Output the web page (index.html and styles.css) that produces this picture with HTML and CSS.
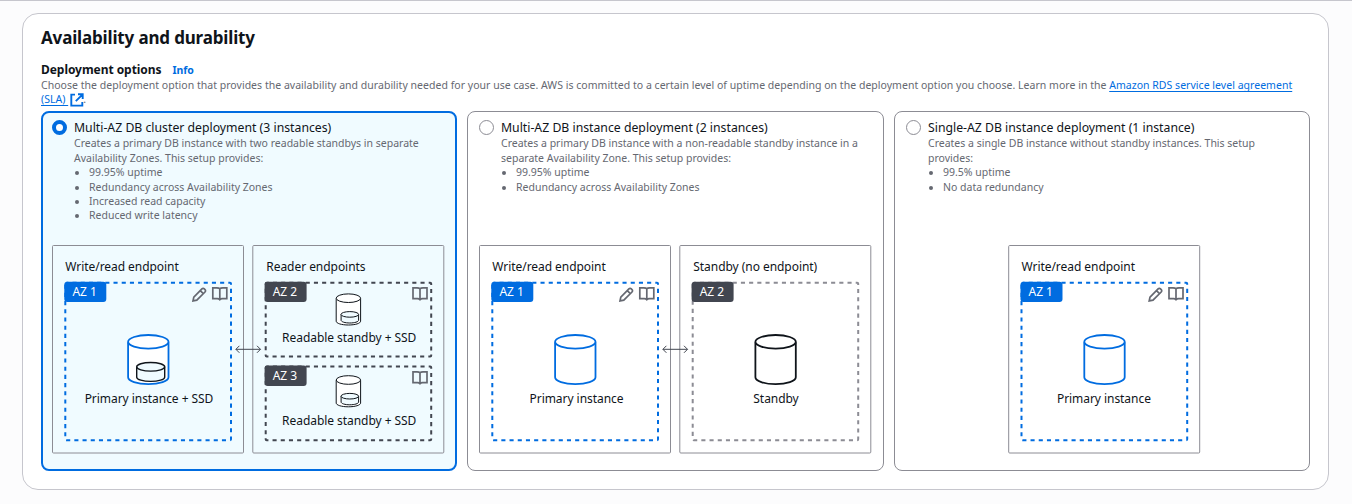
FILE: index.html
```
<!DOCTYPE html>
<html lang="en">
<head>
<meta charset="utf-8">
<title>Availability and durability</title>
<link rel="stylesheet" href="styles.css">
</head>
<body>
<svg class="defs" width="0" height="0" aria-hidden="true">
  <defs>
    <symbol id="cylinder" viewBox="0 0 44 52" overflow="visible">
      <path d="M1.8 8.7V43.7C1.8 47.5 10.8 50.6 22 50.6S42.2 47.5 42.2 43.7V8.7"/>
      <ellipse cx="22" cy="8.2" rx="20.2" ry="6.8"/>
    </symbol>
    <symbol id="disk" viewBox="0 0 30 21" overflow="visible">
      <path d="M1 5.3V15.7C1 18 7.3 19.9 15 19.9S29 18 29 15.7V5.3"/>
      <ellipse cx="15" cy="5.3" rx="14" ry="4.3"/>
    </symbol>
    <symbol id="reader" viewBox="0 0 26 33" overflow="visible">
      <path class="white" d="M.8 5.2V28C.8 30.2 6.2 31.8 13 31.8S25.2 30.2 25.2 28V5.2"/>
      <ellipse class="white" cx="13" cy="5" rx="12.2" ry="4.3"/>
      <path class="tint" d="M5.7 21.2V27C5.7 28.6 9.6 29.8 14.4 29.8S23.2 28.6 23.2 27V21.2"/>
      <ellipse class="tint" cx="14.4" cy="21.2" rx="8.8" ry="2.8"/>
    </symbol>
    <symbol id="book" viewBox="0 0 16 16" overflow="visible">
      <path d="M8 2.4C7.5 1.8 6.5 1.5 5 1.5H1V12.4H5.5C6.8 12.4 7.4 12.6 8 13.3C8.6 12.6 9.2 12.4 10.5 12.4H15V1.5H11C9.5 1.5 8.5 1.8 8 2.4ZM8 2.4V13.8"/>
    </symbol>
    <symbol id="pencil" viewBox="0 0 16 16" overflow="visible">
      <path d="M1.4 14.2L2.2 10.4L10.3 2.2C11 1.5 12 1.5 12.7 2.2L13.4 2.9C14.1 3.6 14.1 4.6 13.4 5.3L5.2 13.4ZM8.7 3.9L11.7 6.9"/>
    </symbol>
    <symbol id="arrows" viewBox="0 0 26 8" overflow="visible">
      <path d="M.7 4H25.3M4.2 .5L.7 4L4.2 7.5M21.8 .5L25.3 4L21.8 7.5"/>
    </symbol>
  </defs>
</svg>
<main class="container">
  <h1 class="heading">Availability and durability</h1>
  <div class="field-label"><span class="label">Deployment options</span><a class="info">Info</a></div>
  <p class="description">Choose the deployment option that provides the availability and durability needed for your use case. AWS is committed to a certain level of uptime depending on the deployment option you choose. Learn more in the <a class="link">Amazon RDS service level agreement<br>(SLA) </a><svg class="external" viewBox="0 0 14 14"><path d="M5 1.6H1.3V12.6H12.3V9M8 1.3H12.7V6M12.4 1.6L5.8 8.2"/></svg>.</p>
  <div class="tiles">
    <section class="tile selected">
      <div class="option">
        <span class="radio"></span>
        <div class="option-body">
          <h2 class="option-title">Multi-AZ DB cluster deployment (3 instances)</h2>
          <p class="option-text">Creates a primary DB instance with two readable standbys in separate<br>Availability Zones. This setup provides:</p>
          <ul class="benefits"><li>99.95% uptime</li><li>Redundancy across Availability Zones</li><li>Increased read capacity</li><li>Reduced write latency</li></ul>
        </div>
      </div>
      <svg class="diagram" width="393" height="209" viewBox="0 0 393 209">
        <rect class="frame" x=".5" y=".5" width="191" height="207.5" rx="1"/>
        <rect class="frame" x="200.8" y=".5" width="191" height="207.5" rx="1"/>
        <text class="text" x="13.3" y="26">Write/read endpoint</text>
        <text class="text" x="214.3" y="26">Reader endpoints</text>
        <rect class="zone blue" x="13.3" y="37.7" width="165.7" height="157.5" rx="1"/>
        <rect class="badge blue-fill" x="12.3" y="36.7" width="42" height="20.3" rx="3"/>
        <text class="text badge-text" x="20.4" y="51">AZ 1</text>
        <use class="icon" href="#pencil" x="139.6" y="41.7" width="16" height="16"/>
        <use class="icon" href="#book" x="159.8" y="41.3" width="16" height="16"/>
        <use class="db blue" href="#cylinder" x="74.3" y="88.6" width="44" height="52"/>
        <use class="disk" href="#disk" x="83.7" y="116.5" width="30" height="21"/>
        <text class="text mid" x="97" y="158">Primary instance + SSD</text>
        <rect class="zone dark" x="213.7" y="37.7" width="165.5" height="73.7" rx="1"/>
        <rect class="badge dark-fill" x="212.6" y="36.7" width="42" height="20.3" rx="3"/>
        <text class="text badge-text" x="220.7" y="51">AZ 2</text>
        <use class="icon" href="#book" x="360" y="41.3" width="16" height="16"/>
        <use class="mini" href="#reader" x="283.4" y="48.2" width="26" height="33"/>
        <text class="text mid" x="297.2" y="97">Readable standby + SSD</text>
        <rect class="zone dark" x="213.7" y="121.6" width="165.5" height="73.7" rx="1"/>
        <rect class="badge dark-fill" x="212.6" y="120.6" width="42" height="20.3" rx="3"/>
        <text class="text badge-text" x="220.7" y="135">AZ 3</text>
        <use class="icon" href="#book" x="360" y="125.3" width="16" height="16"/>
        <use class="mini" href="#reader" x="283.4" y="130" width="26" height="33"/>
        <text class="text mid" x="297.2" y="180">Readable standby + SSD</text>
        <use class="arrows" href="#arrows" x="183.2" y="100.3" width="26" height="8"/>
      </svg>
    </section>
    <section class="tile">
      <div class="option">
        <span class="radio"></span>
        <div class="option-body">
          <h2 class="option-title">Multi-AZ DB instance deployment (2 instances)</h2>
          <p class="option-text">Creates a primary DB instance with a non-readable standby instance in a<br>separate Availability Zone. This setup provides:</p>
          <ul class="benefits"><li>99.95% uptime</li><li>Redundancy across Availability Zones</li></ul>
        </div>
      </div>
      <svg class="diagram" width="393" height="209" viewBox="0 0 393 209">
        <rect class="frame" x=".5" y=".5" width="191" height="207.5" rx="1"/>
        <rect class="frame" x="200.8" y=".5" width="191" height="207.5" rx="1"/>
        <text class="text" x="13.3" y="26">Write/read endpoint</text>
        <text class="text" x="214.3" y="26">Standby (no endpoint)</text>
        <rect class="zone blue" x="13.3" y="37.7" width="165.7" height="157.5" rx="1"/>
        <rect class="badge blue-fill" x="12.3" y="36.7" width="42" height="20.3" rx="3"/>
        <text class="text badge-text" x="20.4" y="51">AZ 1</text>
        <use class="icon" href="#pencil" x="139.6" y="41.7" width="16" height="16"/>
        <use class="icon" href="#book" x="159.8" y="41.3" width="16" height="16"/>
        <use class="db blue" href="#cylinder" x="74.3" y="88.6" width="44" height="52"/>
        <text class="text mid" x="97.5" y="158">Primary instance</text>
        <rect class="zone gray" x="213.7" y="37.7" width="165.5" height="157.5" rx="1"/>
        <rect class="badge dark-fill" x="212.6" y="36.7" width="42" height="20.3" rx="3"/>
        <text class="text badge-text" x="220.7" y="51">AZ 2</text>
        <use class="db black" href="#cylinder" x="274.6" y="88.6" width="44" height="52"/>
        <text class="text mid" x="297" y="158">Standby</text>
        <use class="arrows" href="#arrows" x="183.2" y="100.3" width="26" height="8"/>
      </svg>
    </section>
    <section class="tile">
      <div class="option">
        <span class="radio"></span>
        <div class="option-body">
          <h2 class="option-title">Single-AZ DB instance deployment (1 instance)</h2>
          <p class="option-text">Creates a single DB instance without standby instances. This setup<br>provides:</p>
          <ul class="benefits"><li>99.5% uptime</li><li>No data redundancy</li></ul>
        </div>
      </div>
      <svg class="diagram" width="393" height="209" viewBox="0 0 393 209">
        <g transform="translate(102.2 0)">
          <rect class="frame" x=".5" y=".5" width="191" height="207.5" rx="1"/>
          <text class="text" x="13.3" y="26">Write/read endpoint</text>
          <rect class="zone blue" x="13.3" y="37.7" width="165.7" height="157.5" rx="1"/>
          <rect class="badge blue-fill" x="12.3" y="36.7" width="42" height="20.3" rx="3"/>
          <text class="text badge-text" x="20.4" y="51">AZ 1</text>
          <use class="icon" href="#pencil" x="139.6" y="41.7" width="16" height="16"/>
          <use class="icon" href="#book" x="159.8" y="41.3" width="16" height="16"/>
          <use class="db blue" href="#cylinder" x="74.3" y="88.6" width="44" height="52"/>
          <text class="text mid" x="95.7" y="158">Primary instance</text>
        </g>
      </svg>
    </section>
  </div>
</main>
</body>
</html>
```
FILE: styles.css
```
* { box-sizing: border-box; }
body {
  margin: 0;
  height: 504px;
  padding: 12px 23px 0 22px;
  border-top: 1px solid #c6c6cd;
  background: #fcfcfd;
  color: #0f141a;
  font-family: "Noto Sans", sans-serif;
  overflow: hidden;
}
.defs { display: block; }
h1, h2, p, ul { margin: 0; }
.container {
  height: 477px;
  padding: 13px 18px 0;
  border: 1px solid #c6c6cd;
  border-radius: 16px;
  background: #fff;
}
.heading { font-size: 17px; line-height: 22px; font-weight: 700; letter-spacing: -0.16px; }
.field-label { display: flex; gap: 11px; height: 29px; padding-top: 12px; line-height: 18px; }
.label { font-size: 12px; font-weight: 700; letter-spacing: -0.05px; }
.info { font-size: 10.5px; font-weight: 700; color: #006ce0; letter-spacing: -0.1px; line-height: 19px; }
.description {
  height: 33px;
  font-size: 10.5px;
  line-height: 14.4px;
  letter-spacing: 0.027px;
  color: #656871;
  white-space: nowrap;
}
.link {
  color: #006ce0;
  white-space: pre;
  text-decoration: underline;
  text-decoration-thickness: 1px;
  text-underline-offset: 2px;
  text-decoration-skip-ink: none;
}
.external { width: 14px; height: 14px; margin-left: 2px; margin-right: -1px; vertical-align: -4px; fill: none; stroke: #006ce0; stroke-width: 1.9; }
.tiles { display: grid; grid-template-columns: 416px 417px 416px; gap: 10px; height: 360px; }
.tile {
  display: flex;
  flex-direction: column;
  padding: 6px 0 0 11px;
  border: 1px solid #8c8c94;
  border-radius: 8px;
}
.selected { padding: 5px 0 0 9px; border: 2px solid #006ce0; background: #f0fbff; }
.option { display: flex; gap: 7px; height: 127px; }
.radio { width: 15px; height: 15px; margin-top: 2px; border: 1px solid #8c8c94; border-radius: 50%; background: #fff; }
.selected .radio { border: 4.5px solid #006ce0; }
.option-title { padding-top: 1px; font-size: 12.25px; line-height: 17.3px; font-weight: 400; white-space: nowrap; }
.option-text, .benefits { font-size: 10.5px; line-height: 14.4px; color: #656871; white-space: nowrap; }
.benefits { padding-left: 15px; }
.diagram { display: block; flex: none; }
.frame { fill: none; stroke: #8c8c94; }
.zone { fill: none; stroke-width: 2; stroke-dasharray: 4.1 4.1; stroke-dashoffset: 2; }
.blue { stroke: #006ce0; }
.dark { stroke: #424650; }
.gray { stroke: #8c8c94; }
.black { stroke: #0f141a; }
.blue-fill { fill: #006ce0; }
.dark-fill { fill: #424650; }
.db { fill: #fff; stroke-width: 1.8; }
.disk { fill: #f0fbff; stroke: #0f141a; stroke-width: 1.4; }
.mini { stroke: #0f141a; stroke-width: 1; }
.white { fill: #fff; }
.tint { fill: #f0fbff; }
.icon { fill: none; stroke: #656871; stroke-width: 1.7; }
.arrows { fill: none; stroke: #424650; stroke-width: 1; }
.text { font-size: 12px; letter-spacing: -0.05px; fill: #0f141a; }
.mid { text-anchor: middle; }
.badge-text { fill: #fff; }
```
